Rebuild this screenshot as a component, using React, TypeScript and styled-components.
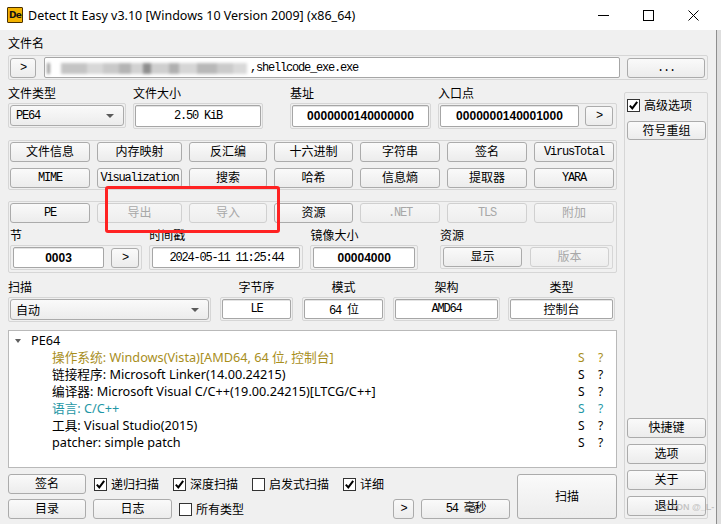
import React from "react";
import styled, { createGlobalStyle, css } from "styled-components";

// ---------------------------------------------------------------------------
// Fonts
// ---------------------------------------------------------------------------

const UI_FONT = `"Noto Sans", "Noto Sans CJK SC", sans-serif`;
const MONO_FONT = `"Liberation Mono", "Noto Sans CJK SC", monospace`;
const HEX_FONT = `"Liberation Sans", "Noto Sans CJK SC", sans-serif`;

const GlobalStyle = createGlobalStyle`
  html, body { margin: 0; padding: 0; background: #e2e2e2; }
  body { font-family: ${UI_FONT}; font-size: 12px; color: #000; }
  * { box-sizing: border-box; }
`;

// ---------------------------------------------------------------------------
// Shell
// ---------------------------------------------------------------------------

const Screen = styled.div`
  position: relative;
  width: 721px;
  height: 524px;
  overflow: hidden;
  display: flex;
  background: linear-gradient(#fff 0 30px, #dedede 30px);
`;

const Window = styled.div`
  width: 717px;
  height: 524px;
  display: flex;
  flex-direction: column;
  flex-shrink: 0;
`;

const TitleBar = styled.div`
  height: 30px;
  flex-shrink: 0;
  background: #fff;
  display: flex;
  align-items: center;
  padding: 0 1px 0 7px;
`;

const AppIcon = styled.div`
  width: 16px;
  height: 16px;
  background: #f2b200;
  border: 1px solid #4a3000;
  border-radius: 1px;
  display: flex;
  align-items: center;
  justify-content: center;
  font-family: "DejaVu Sans", sans-serif;
  font-weight: bold;
  font-size: 9px;
  letter-spacing: -0.8px;
  color: #111;
`;

const TitleText = styled.div`
  flex: 1;
  margin-left: 5px;
  font-size: 12.5px;
  white-space: nowrap;
`;

const WinButton = styled.div`
  width: 45px;
  height: 30px;
  display: flex;
  align-items: center;
  justify-content: center;
`;

const Body = styled.div`
  flex: 1;
  display: flex;
  flex-direction: column;
  padding: 6px 0 5px 8px;
  background: #f0f0f0;
  border-right: 1px solid #8e8e8e;
`;

// ---------------------------------------------------------------------------
// Controls
// ---------------------------------------------------------------------------

const Label = styled.div<{ $center?: boolean }>`
  height: 16px;
  line-height: 16px;
  font-size: 12px;
  white-space: nowrap;
  text-align: ${(p) => (p.$center ? "center" : "left")};
`;

const Frame = styled.div<{ $gap?: number; $pad?: string }>`
  display: flex;
  align-items: center;
  gap: ${(p) => p.$gap ?? 6}px;
  border: 1px solid #d6d6d6;
  border-radius: 2px;
  padding: ${(p) => p.$pad ?? "1px"};
`;

const monoText = css`
  font-family: ${MONO_FONT};
  font-size: 12px;
  letter-spacing: -1.2px;
`;

const Button = styled.button<{ $w?: number; $h?: number; $mono?: boolean }>`
  width: ${(p) => (p.$w ? `${p.$w}px` : "100%")};
  height: ${(p) => p.$h ?? 20}px;
  flex-shrink: 0;
  margin: 0;
  padding: 0;
  border: 1px solid #ababab;
  border-radius: 3px;
  background: linear-gradient(#fafafa, #ececec);
  color: #000;
  font-family: ${UI_FONT};
  font-size: 12px;
  line-height: 1;
  white-space: nowrap;
  ${(p) => p.$mono && monoText}

  &:disabled {
    border-color: #d0d0d0;
    background: linear-gradient(#f6f6f6, #eeeeee);
    color: #a8a8a8;
  }
`;

const Field = styled.div<{ $w?: number; $h?: number; $kind?: "mono" | "hex" | "ui" }>`
  width: ${(p) => (p.$w ? `${p.$w}px` : "auto")};
  flex: ${(p) => (p.$w ? "0 0 auto" : "1")};
  height: ${(p) => p.$h ?? 21}px;
  background: #fff;
  border: 1px solid #a6a6a6;
  border-radius: 2px;
  box-shadow: inset 0 1px 0 #e4e4e4;
  display: flex;
  align-items: center;
  justify-content: center;
  white-space: nowrap;
  ${(p) =>
    p.$kind === "hex"
      ? css`
          font-family: ${HEX_FONT};
          font-weight: bold;
          font-size: 12px;
        `
      : p.$kind === "mono"
      ? monoText
      : css`
          font-size: 12px;
        `}
`;

const Combo = styled.div<{ $mono?: boolean }>`
  flex: 1;
  height: 21px;
  border: 1px solid #ababab;
  border-radius: 3px;
  background: linear-gradient(#fafafa, #ececec);
  display: flex;
  align-items: center;
  justify-content: space-between;
  padding: 0 9px 0 5px;
  ${(p) => (p.$mono ? monoText : css`font-size: 12px;`)}
`;

const ComboArrow = styled.span`
  width: 0;
  height: 0;
  border-left: 4px solid transparent;
  border-right: 4px solid transparent;
  border-top: 4px solid #5a5a5a;
`;

const CheckItem = styled.label`
  display: inline-flex;
  align-items: center;
  gap: 4px;
  height: 20px;
  white-space: nowrap;
  font-size: 12px;
`;

const CheckBox = styled.span`
  width: 13px;
  height: 13px;
  flex-shrink: 0;
  background: #fff;
  border: 1px solid #333;
  display: inline-flex;
  align-items: center;
  justify-content: center;
`;

function Check({ checked, children }: { checked?: boolean; children: React.ReactNode }) {
  return (
    <CheckItem>
      <CheckBox>
        {checked && (
          <svg width="11" height="11" viewBox="0 0 11 11">
            <path d="M1.8 5.6 L4.3 8.4 L9.2 1.8" fill="none" stroke="#000" strokeWidth="2" />
          </svg>
        )}
      </CheckBox>
      {children}
    </CheckItem>
  );
}

// ---------------------------------------------------------------------------
// Layout pieces
// ---------------------------------------------------------------------------

const FileFrame = styled(Frame)`
  width: 700px;
  margin-top: 3px;
  padding: 1px 2px 1px 1px;
`;

const PathInput = styled.div`
  flex: 1;
  height: 21px;
  margin: 0 1px 0 2px;
  background: #fff;
  border: 1px solid #a6a6a6;
  border-radius: 2px;
  display: flex;
  align-items: center;
  padding-left: 2px;
  overflow: hidden;
  white-space: nowrap;
`;

// Redacted part of the path: blurred grey blobs, no readable text
const Redaction = styled.span`
  display: inline-block;
  width: 203px;
  height: 11px;
  margin-top: 1px;
  filter: blur(1.6px);
  background: linear-gradient(
    to right,
    #9a9a9a 0 3px,
    transparent 3px 14px,
    #c4c4c4 14px 40px,
    #d8d8d8 40px 56px,
    #c9c9c9 56px 72px,
    #b4b4b4 72px 84px,
    #d2d2d2 84px 96px,
    #8e8e8e 96px 104px,
    #cfcfcf 104px 122px,
    #b0b0b0 122px 132px,
    #d6d6d6 132px 150px,
    #b8b8b8 150px 170px,
    #cbcbcb 170px 186px,
    #d9d9d9 186px 200px,
    transparent 200px
  );
`;

const MonoText = styled.span`
  ${monoText}
`;

const Split = styled.div`
  display: flex;
  margin-top: 6px;
  flex: 1;
`;

const LeftCol = styled.div`
  width: 609px;
  display: flex;
  flex-direction: column;
`;

const Row = styled.div<{ $mt?: number }>`
  display: flex;
  align-items: flex-start;
  margin-top: ${(p) => p.$mt ?? 0}px;
`;

const Group = styled.div<{ $w: number; $ml?: number }>`
  width: ${(p) => p.$w}px;
  margin-left: ${(p) => p.$ml ?? 0}px;
  display: flex;
  flex-direction: column;
  & > ${Frame} {
    margin-top: 1px;
  }
`;

const ButtonGrid = styled.div`
  display: grid;
  grid-template-columns: 80px 85px 78px 79px 80px 80px 80px;
  gap: 6px 7px;
`;

const Panel = styled.div<{ $mt: number; $pad?: string }>`
  margin-top: ${(p) => p.$mt}px;
  border: 1px solid #d6d6d6;
  border-radius: 2px;
  padding: ${(p) => p.$pad ?? "1px 3px 1px 1px"};
`;

const Tree = styled.div`
  margin-top: 8px;
  height: 138px;
  background: #fff;
  border: 1px solid #b9b9b9;
  padding-top: 1px;
`;

const TreeRow = styled.div<{ $color?: string; $indent: number }>`
  height: 17px;
  line-height: 17px;
  display: grid;
  grid-template-columns: 1fr 20px 19px;
  align-items: center;
  padding-left: ${(p) => p.$indent}px;
  color: ${(p) => p.$color ?? "#000"};
  font-size: 12.7px;
  white-space: nowrap;
`;

const TreeText = styled.span`
  display: flex;
  align-items: center;
  height: 17px;
`;

const Expander = styled.span`
  width: 0;
  height: 0;
  margin-right: 10px;
  border-left: 3.5px solid transparent;
  border-right: 3.5px solid transparent;
  border-top: 4px solid #606060;
`;

const Status = styled.span`
  padding-left: 1px;
  font-size: 12px;
  line-height: 17px;
`;

const BottomArea = styled.div`
  display: flex;
  margin-top: 6px;
`;

const BottomLeft = styled.div`
  width: 502px;
  display: flex;
  flex-direction: column;
  gap: 5px;
`;

const BottomRow = styled.div<{ $gap?: number }>`
  display: flex;
  align-items: center;
  height: 20px;
  gap: ${(p) => p.$gap ?? 14}px;
`;

const Spacer = styled.div`
  flex: 1;
`;

const RightPanel = styled.div`
  width: 84px;
  margin: 6px 0 0 7px;
  border: 1px solid #d6d6d6;
  border-radius: 2px;
  padding: 2px 2px 2px 2px;
  display: flex;
  flex-direction: column;
  gap: 6px;
`;

const Watermark = styled.div`
  position: absolute;
  left: 664px;
  top: 502px;
  font-family: "Liberation Sans", sans-serif;
  font-size: 9px;
  font-weight: bold;
  color: rgba(150, 150, 150, 0.5);
  white-space: nowrap;
`;

const Annotation = styled.div`
  position: absolute;
  left: 105px;
  top: 186px;
  width: 175px;
  height: 47px;
  border: 3px solid #ff2222;
  border-radius: 3px;
`;

// ---------------------------------------------------------------------------
// Data
// ---------------------------------------------------------------------------

const TOOL_BUTTONS: { label: string; mono?: boolean }[] = [
  { label: "文件信息" },
  { label: "内存映射" },
  { label: "反汇编" },
  { label: "十六进制" },
  { label: "字符串" },
  { label: "签名" },
  { label: "VirusTotal", mono: true },
  { label: "MIME", mono: true },
  { label: "Visualization", mono: true },
  { label: "搜索" },
  { label: "哈希" },
  { label: "信息熵" },
  { label: "提取器" },
  { label: "YARA", mono: true },
];

const PE_BUTTONS: { label: string; mono?: boolean; disabled?: boolean }[] = [
  { label: "PE", mono: true },
  { label: "导出", disabled: true },
  { label: "导入", disabled: true },
  { label: "资源" },
  { label: ".NET", mono: true, disabled: true },
  { label: "TLS", mono: true, disabled: true },
  { label: "附加", disabled: true },
];

const OLIVE = "#a88e1c";
const TEAL = "#1f97a6";

const DETECTS: { text: string; color?: string }[] = [
  { text: "操作系统: Windows(Vista)[AMD64, 64 位, 控制台]", color: OLIVE },
  { text: "链接程序: Microsoft Linker(14.00.24215)" },
  { text: "编译器: Microsoft Visual C/C++(19.00.24215)[LTCG/C++]" },
  { text: "语言: C/C++", color: TEAL },
  { text: "工具: Visual Studio(2015)" },
  { text: "patcher: simple patch" },
];

// ---------------------------------------------------------------------------
// Component
// ---------------------------------------------------------------------------

export default function App() {
  return (
    <Screen>
      <GlobalStyle />
      <Window>
        <TitleBar>
          <AppIcon>De</AppIcon>
          <TitleText>Detect It Easy v3.10 [Windows 10 Version 2009] (x86_64)</TitleText>
          <WinButton>
            <svg width="11" height="11" viewBox="0 0 11 11">
              <path d="M0 5.5 H11" stroke="#000" strokeWidth="1" />
            </svg>
          </WinButton>
          <WinButton>
            <svg width="11" height="11" viewBox="0 0 11 11">
              <rect x="0.5" y="0.5" width="10" height="10" fill="none" stroke="#000" strokeWidth="1" />
            </svg>
          </WinButton>
          <WinButton>
            <svg width="11" height="11" viewBox="0 0 11 11">
              <path d="M0.5 0.5 L10.5 10.5 M10.5 0.5 L0.5 10.5" stroke="#000" strokeWidth="1" />
            </svg>
          </WinButton>
        </TitleBar>

        <Body>
          <Label>文件名</Label>
          <FileFrame $gap={6}>
            <Button $w={26} $mono>&gt;</Button>
            <PathInput>
              <Redaction aria-hidden="true" />
              <MonoText>,shellcode_exe.exe</MonoText>
            </PathInput>
            <Button $w={78} $mono>...</Button>
          </FileFrame>

          <Split>
            <LeftCol>
              <Row>
                <Group $w={118}>
                  <Label>文件类型</Label>
                  <Frame>
                    <Combo $mono>
                      PE64
                      <ComboArrow />
                    </Combo>
                  </Frame>
                </Group>
                <Group $w={130} $ml={7}>
                  <Label>文件大小</Label>
                  <Frame>
                    <Field $h={22} $kind="mono">2.50 KiB</Field>
                  </Frame>
                </Group>
                <Group $w={141} $ml={27}>
                  <Label>基址</Label>
                  <Frame>
                    <Field $h={22} $kind="hex">0000000140000000</Field>
                  </Frame>
                </Group>
                <Group $w={179} $ml={7}>
                  <Label>入口点</Label>
                  <Frame $pad="1px 4px 1px 1px">
                    <Field $w={139} $h={22} $kind="hex">0000000140001000</Field>
                    <Button $w={28} $mono>&gt;</Button>
                  </Frame>
                </Group>
              </Row>

              <Panel $mt={11}>
                <ButtonGrid>
                  {TOOL_BUTTONS.map((b) => (
                    <Button key={b.label} $mono={b.mono}>
                      {b.label}
                    </Button>
                  ))}
                </ButtonGrid>
              </Panel>

              <Panel $mt={11} $pad="1px 3px 2px 1px">
                <ButtonGrid>
                  {PE_BUTTONS.map((b) => (
                    <Button key={b.label} $mono={b.mono} disabled={b.disabled}>
                      {b.label}
                    </Button>
                  ))}
                </ButtonGrid>
                <Row $mt={5}>
                  <Group $w={133}>
                    <Label>节</Label>
                    <Frame $gap={7} $pad="1px 2px">
                      <Field $w={91} $kind="hex">0003</Field>
                      <Button $w={28} $mono>&gt;</Button>
                    </Frame>
                  </Group>
                  <Group $w={155} $ml={7}>
                    <Label>时间戳</Label>
                    <Frame $pad="1px 2px">
                      <Field $kind="mono">2024-05-11 11:25:44</Field>
                    </Frame>
                  </Group>
                  <Group $w={108} $ml={7}>
                    <Label>镜像大小</Label>
                    <Frame $pad="1px 2px">
                      <Field $kind="hex">00004000</Field>
                    </Frame>
                  </Group>
                  <Group $w={174} $ml={22}>
                    <Label>资源</Label>
                    <Frame $gap={8} $pad="1px 2px">
                      <Button $w={79}>显示</Button>
                      <Button $w={79} disabled>
                        版本
                      </Button>
                    </Frame>
                  </Group>
                </Row>
              </Panel>

              <Row $mt={7}>
                <Group $w={203}>
                  <Label>扫描</Label>
                  <Frame>
                    <Combo>
                      自动
                      <ComboArrow />
                    </Combo>
                  </Frame>
                </Group>
                <Group $w={73} $ml={9}>
                  <Label $center>字节序</Label>
                  <Frame>
                    <Field $h={20} $kind="mono">LE</Field>
                  </Frame>
                </Group>
                <Group $w={83} $ml={9}>
                  <Label $center>模式</Label>
                  <Frame>
                    <Field $h={20} $kind="mono">64 位</Field>
                  </Frame>
                </Group>
                <Group $w={107} $ml={8}>
                  <Label $center>架构</Label>
                  <Frame>
                    <Field $h={20} $kind="mono">AMD64</Field>
                  </Frame>
                </Group>
                <Group $w={107} $ml={8}>
                  <Label $center>类型</Label>
                  <Frame>
                    <Field $h={20}>控制台</Field>
                  </Frame>
                </Group>
              </Row>

              <Tree>
                <TreeRow $indent={6}>
                  <TreeText>
                    <Expander />
                    PE64
                  </TreeText>
                </TreeRow>
                {DETECTS.map((d) => (
                  <TreeRow key={d.text} $indent={43} $color={d.color}>
                    <TreeText>{d.text}</TreeText>
                    <Status>S</Status>
                    <Status>?</Status>
                  </TreeRow>
                ))}
              </Tree>

              <BottomArea>
                <BottomLeft>
                  <BottomRow>
                    <Button $w={78} style={{ marginRight: -6 }}>
                      签名
                    </Button>
                    <Check checked>递归扫描</Check>
                    <Check checked>深度扫描</Check>
                    <Check>启发式扫描</Check>
                    <Check checked>详细</Check>
                  </BottomRow>
                  <BottomRow $gap={7}>
                    <Button $w={78}>目录</Button>
                    <Button $w={79}>日志</Button>
                    <Check>所有类型</Check>
                    <Spacer />
                    <Button $w={21} $mono>
                      &gt;
                    </Button>
                    <Button $w={89} $mono>
                      54 毫秒
                    </Button>
                  </BottomRow>
                </BottomLeft>
                <Button $w={100} $h={45} style={{ marginLeft: 7 }}>
                  扫描
                </Button>
              </BottomArea>
            </LeftCol>

            <RightPanel>
              <Check checked>高级选项</Check>
              <Button $w={79} $h={19}>
                符号重组
              </Button>
              <Spacer />
              <Button $w={79}>快捷键</Button>
              <Button $w={79}>选项</Button>
              <Button $w={79}>关于</Button>
              <Button $w={79}>退出</Button>
            </RightPanel>
          </Split>
        </Body>
      </Window>
      <Annotation />
      <Watermark>CSDN @_L-</Watermark>
    </Screen>
  );
}
